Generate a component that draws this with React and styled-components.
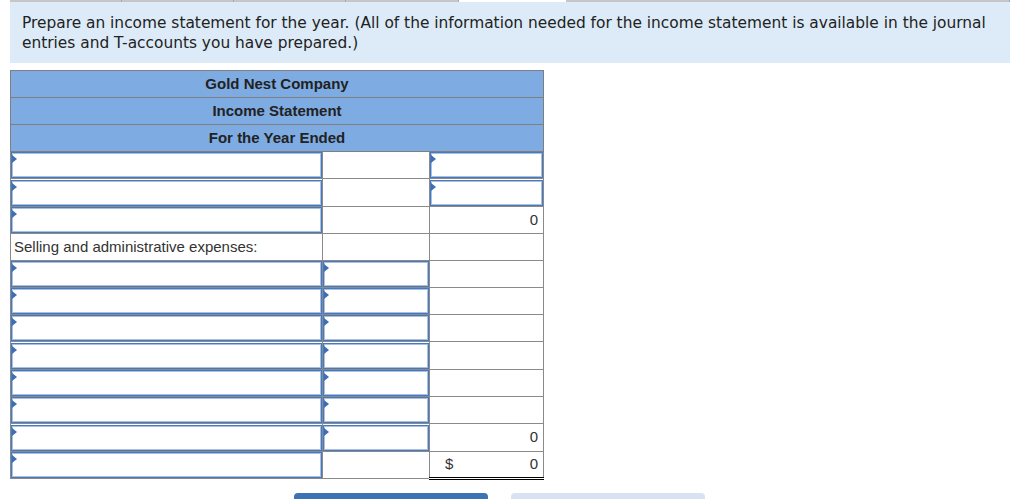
import React from "react";
import styled, { createGlobalStyle } from "styled-components";

const Global = createGlobalStyle`
  html, body { margin: 0; padding: 0; background: #fff; }
  body { font-family: "Liberation Sans", Arial, sans-serif; }
`;

const Page = styled.div`
  padding-left: 10px;
  width: 1000px;
`;

const TabStrip = styled.div`
  display: flex;
  height: 2px;
`;

const Tab = styled.div`
  height: 2px;
  width: ${(p) => p.$w}px;
  background: ${(p) => (p.$active ? "#ffffff" : "#c6c6c6")};
  border-right: ${(p) => (p.$active ? "none" : "1px solid #a8a8a8")};
`;

const Panel = styled.div`
  background: #dcebf7;
  padding: 11px 12px 10px 12px;
  font-family: "DejaVu Sans", Verdana, sans-serif;
  font-size: 15.4px;
  line-height: 20px;
  color: #222;
`;

const Sheet = styled.table`
  margin-top: 7px;
  width: 533px;
  border-collapse: collapse;
  table-layout: fixed;
  font-size: 15px;
  color: #333;
`;

const Row = styled.tr`
  height: ${(p) => (p.$tall ? 28 : 27)}px;
`;

const HeadCell = styled.th`
  height: 24px;
  padding: 0 0 2px 0;
  background: #7eace2;
  border: 1px solid #7f7f7f;
  font-weight: bold;
  color: #222;
  text-align: center;
  vertical-align: middle;
`;

const Cell = styled.td`
  padding: 0 5px 2px 3px;
  border: 1px solid #8a8a8a;
  border-top: ${(p) => (p.$topRule ? "1px solid #000" : "1px solid #8a8a8a")};
  border-bottom: ${(p) => (p.$double ? "3px double #000" : "1px solid #8a8a8a")};
  text-align: ${(p) => (p.$right ? "right" : "left")};
  vertical-align: middle;
  white-space: nowrap;
`;

const InputCell = styled.td`
  padding: 0;
  border: 1px solid #8a8a8a;
  border-top: ${(p) => (p.$topRule ? "1px solid #000" : "1px solid #8a8a8a")};
  vertical-align: middle;
`;

const Field = styled.div`
  position: relative;
  height: 26px;
  box-sizing: border-box;
  border: 1px solid #4a78b8;
  box-shadow: inset 0 0 0 1px #a7c1e6;
  background: #fff;
  &::before {
    content: "";
    position: absolute;
    left: 0;
    top: 2px;
    border-top: 4px solid transparent;
    border-bottom: 4px solid transparent;
    border-left: 5px solid #3c6fb5;
  }
`;

const Dollar = styled.span`
  float: left;
  padding-left: 12px;
`;

const Buttons = styled.div`
  display: flex;
  gap: 23px;
  margin: 13px 0 0 284px;
`;

const Button = styled.div`
  width: 194px;
  height: 30px;
  border-radius: 4px 4px 0 0;
  background: ${(p) => (p.$primary ? "#3d73b5" : "#d8e3f1")};
`;

const InputTd = ({ topRule }) => (
  <InputCell $topRule={topRule}>
    <Field />
  </InputCell>
);

export default function App() {
  const expenseRows = [false, false, false, true, false, false];
  return (
    <>
      <Global />
      <Page>
        <TabStrip>
          <Tab $w={112} />
          <Tab $w={111} />
          <Tab $w={112} />
          <Tab $w={112} />
          <Tab $w={108} $active />
          <Tab $w={445} />
        </TabStrip>
        <Panel>
          Prepare an income statement for the year. (All of the information needed for the income statement is available in the journal entries and T-accounts you have prepared.)
        </Panel>
        <Sheet>
          <colgroup>
            <col style={{ width: 312 }} />
            <col style={{ width: 107 }} />
            <col style={{ width: 114 }} />
          </colgroup>
          <thead>
            <tr><HeadCell colSpan={3}>Gold Nest Company</HeadCell></tr>
            <tr><HeadCell colSpan={3}>Income Statement</HeadCell></tr>
            <tr><HeadCell colSpan={3}>For the Year Ended</HeadCell></tr>
          </thead>
          <tbody>
            <Row>
              <InputTd />
              <Cell />
              <InputTd />
            </Row>
            <Row $tall>
              <InputTd />
              <Cell />
              <InputTd />
            </Row>
            <Row>
              <InputTd />
              <Cell />
              <Cell $right $topRule>0</Cell>
            </Row>
            <Row>
              <Cell>Selling and administrative expenses:</Cell>
              <Cell />
              <Cell />
            </Row>
            {expenseRows.map((tall, i) => (
              <Row key={i} $tall={tall}>
                <InputTd />
                <InputTd />
                <Cell />
              </Row>
            ))}
            <Row $tall>
              <InputTd />
              <InputTd />
              <Cell $right>0</Cell>
            </Row>
            <Row>
              <InputTd />
              <Cell $topRule />
              <Cell $right $topRule $double>
                <Dollar>$</Dollar>0
              </Cell>
            </Row>
          </tbody>
        </Sheet>
        <Buttons>
          <Button $primary />
          <Button />
        </Buttons>
      </Page>
    </>
  );
}
